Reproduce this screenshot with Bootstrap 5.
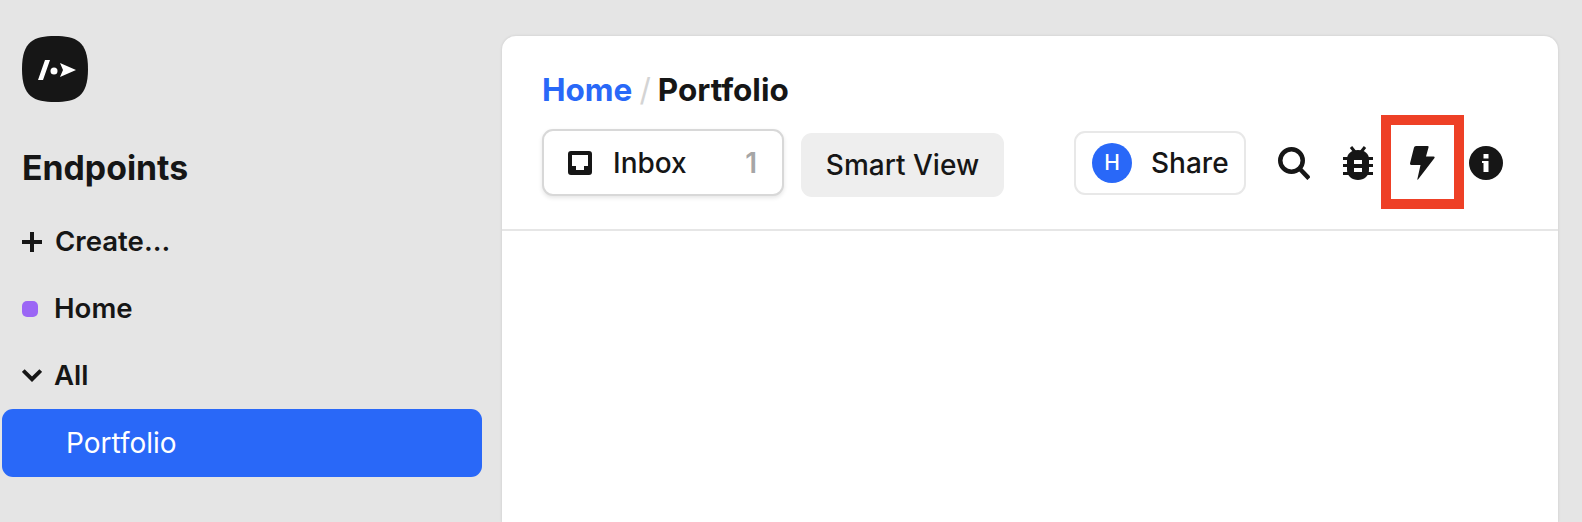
<!DOCTYPE html>
<html lang="en">
<head>
  <meta charset="UTF-8">
  <meta name="viewport" content="width=device-width, initial-scale=1.0">
  <title>Portfolio</title>
  <link href="https://cdn.jsdelivr.net/npm/bootstrap@5.3.0/dist/css/bootstrap.min.css" rel="stylesheet">
  <style>
    html, body { height: 100%; }
    body { background: #e5e5e5; color: #161616; font-family: Inter, "Liberation Sans", sans-serif; overflow: hidden; }
    .side-col { width: 502px; flex: none; padding: 36px 20px 0 2px; }
    .app-logo { width: 66px; height: 66px; margin: 0 0 48px 20px; display: block; }
    .side-title { font-size: 33.8px; font-weight: 700; line-height: 36px; margin: 0 0 22px 20px; }
    .side-link { display: flex; align-items: center; height: 67px; padding: 0 0 0 20px; font-size: 27.6px; font-weight: 600; color: #161616; text-decoration: none; }
    .side-link svg, .side-dot { flex: none; }
    .side-icon { margin-right: 13px; }
    .side-icon-sm { margin-right: 12px; }
    .side-dot { width: 16px; height: 16px; border-radius: 5px; background: #9b66f5; margin-right: 16px; }
    .side-active { background: #2968f8; color: #fff; font-size: 28px; font-weight: 400; border-radius: 11px; height: 68px; padding: 0 0 0 64px; }
    .main-card { margin: 36px 24px 0 0; border-radius: 14px 14px 0 0; background: #fff; box-shadow: 0 0 3px rgba(0,0,0,.12); height: 486px; }
    .card-head { padding: 31px 40px 0 40px; height: 195px; border-bottom: 2px solid #e6e6e6; position: relative; }
    .crumbs { font-size: 31.5px; font-weight: 700; line-height: 46px; margin: 0 0 16px; --bs-breadcrumb-divider-color: #d4d4d4; --bs-breadcrumb-item-padding-x: 7px; }
    .crumbs a { color: #2968f8; text-decoration: none; }
    .crumbs .breadcrumb-item.active { color: #161616; }
    .crumbs .breadcrumb-item + .breadcrumb-item::before { font-weight: 400; }
    .view-btn { font-size: 28px; font-weight: 500; color: #161616; border-radius: 11px; display: flex; align-items: center; padding: 0; }
    .inbox-btn { width: 242px; height: 67px; border: 2px solid #d8d8d8; background: #fff; box-shadow: 0 2px 4px rgba(0,0,0,.1); padding: 0 25px 0 24px; }
    .inbox-icon { margin-right: 21px; }
    .inbox-count { margin-left: auto; color: #a6a6a6; font-weight: 600; }
    .smart-btn { width: 203px; height: 64px; background: #eeeeee; border: 0; justify-content: center; margin: 4px auto 0 17px; }
    .share-btn { width: 172px; height: 64px; border: 2px solid #e8e8e8; background: #fff; padding-left: 16px; margin: 2px 16px 0 0; }
    .share-avatar { width: 40px; height: 40px; border-radius: 50%; background: #2968f8; color: #fff; font-size: 21px; font-weight: 500; display: flex; align-items: center; justify-content: center; margin-right: 19px; }
    .tool-btn { width: 64px; height: 40px; margin-top: 14px; display: flex; align-items: center; justify-content: center; }
    .tool-icon { display: block; flex: none; }
    .mark-box { position: absolute; left: 879px; top: 79px; width: 83px; height: 94px; border: 10px solid #ee4026; }
  </style>
</head>
<body>
  <div class="d-flex h-100">

    <!-- Sidebar -->
    <div class="side-col">
      <svg class="app-logo" viewBox="0 0 66 66">
        <path fill="#161616" d="M33 0C54 0 66 5 66 33C66 61 54 66 33 66C12 66 0 61 0 33C0 5 12 0 33 0Z"/>
        <path fill="#fff" d="M23 24h5l-7 20h-5zM38 27l16 7l-16 7l3-7z"/>
        <circle cx="32" cy="35" r="3.500" fill="#fff"/>
      </svg>
      <h1 class="side-title">Endpoints</h1>
      <nav class="nav flex-column">
        <a class="side-link" href="#">
          <svg class="side-icon" width="20" height="20" viewBox="0 0 20 20"><path fill="#161616" d="M8 0h4v8h8v4h-8v8H8v-8H0V8h8z"/></svg>Create...
        </a>
        <a class="side-link" href="#"><span class="side-dot"></span>Home</a>
        <a class="side-link" href="#">
          <svg class="side-icon-sm" width="20" height="13" viewBox="0 0 20 13"><path fill="none" stroke="#161616" stroke-width="3.800" d="M1.300 1.500l8.700 8.700l8.700-8.700"/></svg>All
        </a>
        <a class="side-link side-active" href="#">Portfolio</a>
      </nav>
    </div>

    <!-- Main -->
    <div class="flex-grow-1">
      <div class="main-card">
        <div class="card-head">
          <ol class="breadcrumb crumbs">
            <li class="breadcrumb-item"><a href="#">Home</a></li>
            <li class="breadcrumb-item active">Portfolio</li>
          </ol>
          <div class="d-flex align-items-start">
            <button class="btn view-btn inbox-btn">
              <svg class="tool-icon inbox-icon" width="24" height="24" viewBox="0 0 24 24"><path fill="#161616" fill-rule="evenodd" d="M3 0h18a3 3 0 0 1 3 3v18a3 3 0 0 1-3 3H3a3 3 0 0 1-3-3V3a3 3 0 0 1 3-3zM4 4v11h4v4h8v-4h4V4z"/></svg>
              Inbox<span class="inbox-count">1</span>
            </button>
            <button class="btn view-btn smart-btn">Smart View</button>
            <button class="btn view-btn share-btn">
              <span class="share-avatar">H</span>Share
            </button>
            <div class="tool-btn">
              <svg class="tool-icon" width="32" height="33" viewBox="0 0 32 33"><circle cx="13.500" cy="13.500" r="11.250" fill="none" stroke="#161616" stroke-width="4.500"/><path stroke="#161616" stroke-width="4.500" d="M21 21L31 31.500"/></svg>
            </div>
            <div class="tool-btn">
              <svg class="tool-icon" width="30" height="34" viewBox="0 0 30 34">
                <path fill="#161616" d="M15 4C22 4 26 8 26 13V24C26 30 21 34 15 34C9 34 4 30 4 24V13C4 8 8 4 15 4Z"/>
                <path stroke="#161616" stroke-width="3" d="M8 1l4 5M22 1l-4 5"/>
                <path fill="#161616" d="M0 11h30v3H0zM0 18h30v3H0zM0 26h30v3H0z"/>
                <path fill="#fff" d="M11 14h8v4h-8zM11 22h8v4h-8z"/>
              </svg>
            </div>
            <div class="tool-btn">
              <svg class="tool-icon" width="25" height="34" viewBox="0 0 25 34"><path fill="#161616" d="M4 1.500Q4.300 0 6 0h11.500q1.500 0 1 1.500L16 10.500h7.500q1.800 0 .8 1.700L8 33.500Q7.300 34.300 7.400 33L10.500 19H1.500Q-.3 19 .1 17z"/></svg>
            </div>
            <div class="tool-btn">
              <svg class="tool-icon" width="34" height="34" viewBox="0 0 34 34"><path fill="#161616" fill-rule="evenodd" d="M17 0a17 17 0 1 1 0 34a17 17 0 0 1 0-34zM14.500 8v4.500h5V8zM13 15v2h1.500v9h5V15z"/></svg>
            </div>
          </div>
          <div class="mark-box"></div>
        </div>
      </div>
    </div>
  </div>

  <script src="https://cdn.jsdelivr.net/npm/bootstrap@5.3.0/dist/js/bootstrap.bundle.min.js"></script>
</body>
</html>
